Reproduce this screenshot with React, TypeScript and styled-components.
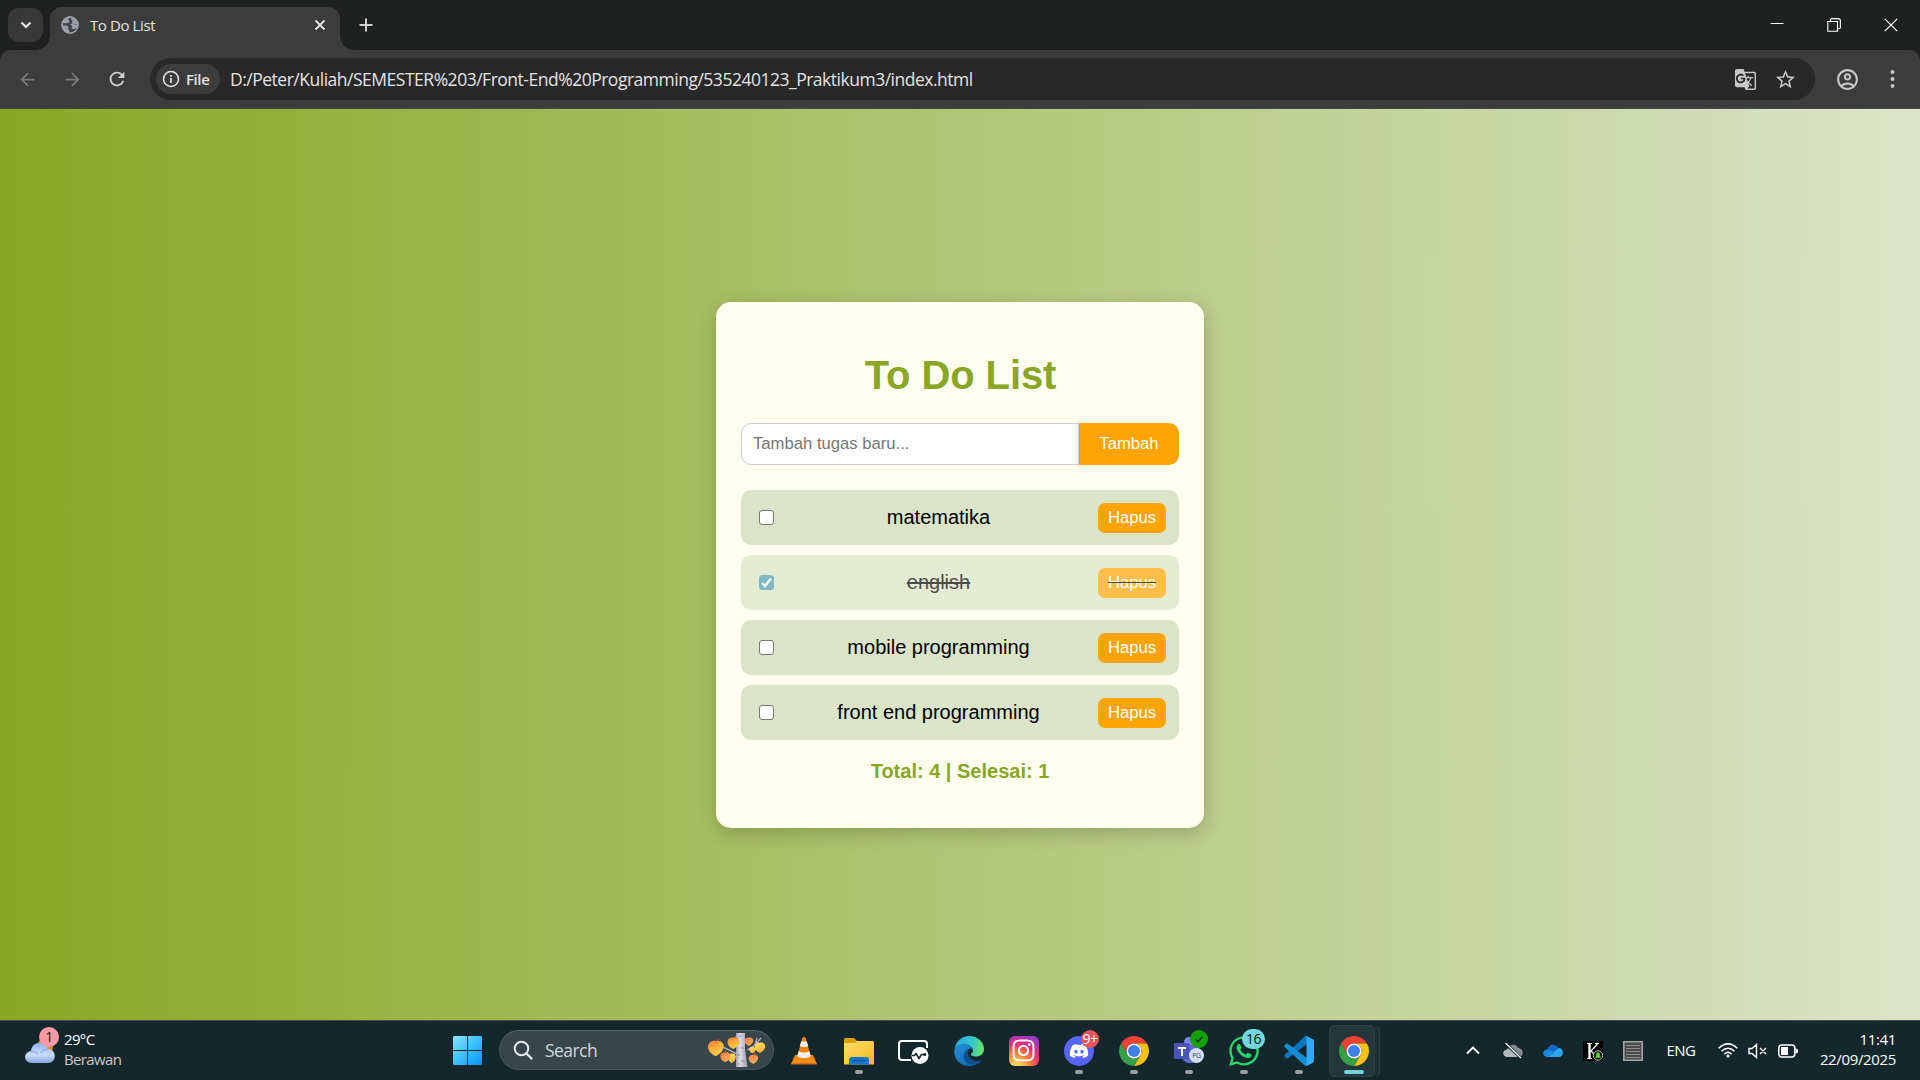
import React, { useState } from "react";
import styled, { createGlobalStyle } from "styled-components";
import {
  MdArrowBack,
  MdArrowForward,
  MdGTranslate,
  MdOutlineAccountCircle,
  MdRefresh,
  MdStarBorder,
} from "react-icons/md";
import { FaDiscord, FaInstagram, FaWhatsapp } from "react-icons/fa6";

const uiFont = `"Open Sans", "Noto Sans", sans-serif`;
const pageFont = `"Liberation Sans", Arial, sans-serif`;

const Global = createGlobalStyle`
  * { box-sizing: border-box; }
  body { margin: 0; background: #1f2120; overflow: hidden; }
  svg { display: block; flex: none; }
`;

const Screen = styled.div`
  width: 1920px;
  height: 1080px;
  display: grid;
  grid-template-rows: 50px 59px 911px 60px;
  overflow: hidden;
`;

/* ---------- Browser chrome ---------- */

const TabStrip = styled.header`
  display: flex;
  background: #1f2120;
  padding-left: 8px;
  font-family: ${uiFont};
`;

const TabSearch = styled.button`
  width: 35px;
  height: 34px;
  margin: 8px 7px 0 0;
  padding: 0;
  border: 0;
  border-radius: 11px;
  background: #383838;
  display: grid;
  place-items: center;
`;

const Tab = styled.div`
  position: relative;
  width: 290px;
  height: 43px;
  margin-top: 7px;
  padding: 0 14px 7px 11px;
  border-radius: 12px 12px 0 0;
  background: #3c3c3c;
  color: #e3e3e3;
  display: flex;
  align-items: center;
  &::before,
  &::after {
    content: "";
    position: absolute;
    bottom: 0;
    width: 14px;
    height: 14px;
  }
  &::before {
    left: -14px;
    background: radial-gradient(circle at 0 0, transparent 13.5px, #3c3c3c 14px);
  }
  &::after {
    right: -14px;
    background: radial-gradient(circle at 100% 0, transparent 13.5px, #3c3c3c 14px);
  }
`;

const TabTitle = styled.span`
  flex: 1;
  margin: 0 0 1px 11px;
  font-size: 15px;
  letter-spacing: -0.4px;
  line-height: 20px;
`;

const NewTab = styled.div`
  margin: 18px 0 0 19px;
`;

const WindowControls = styled.div`
  display: flex;
  gap: 43px;
  margin: 18px 22px 0 auto;
`;

const ToolbarBack = styled.div`
  background: #1f2120;
`;

const Toolbar = styled.div`
  height: 59px;
  background: #3c3c3c;
  border-radius: 11px 11px 0 0;
  border-bottom: 1px solid #474747;
  padding: 0 17px;
  display: flex;
  align-items: center;
  font-family: ${uiFont};
`;

const NavButtons = styled.nav`
  display: flex;
  align-items: center;
  gap: 23.5px;
  width: 133px;
  color: #7b7b7b;
  svg:last-child {
    color: #d0d0d0;
  }
`;

const Omnibox = styled.div`
  width: 1665px;
  height: 42px;
  border-radius: 21px;
  background: #282828;
  color: #e3e3e3;
  padding: 0 18px 0 6px;
  display: flex;
  align-items: center;
`;

const FileChip = styled.span`
  width: 64px;
  height: 30px;
  border-radius: 15px;
  background: #3c3c3c;
  padding-left: 6px;
  display: flex;
  align-items: center;
  gap: 6px;
  font-size: 15px;
  font-weight: 600;
  letter-spacing: -0.4px;
  line-height: 18px;
`;

const Url = styled.span`
  flex: 1;
  margin: 0 0 1px 10px;
  font-size: 17.5px;
  line-height: 24px;
  letter-spacing: -0.49px;
  white-space: nowrap;
`;

const OmniActions = styled.div`
  display: flex;
  align-items: center;
  gap: 17px;
  color: #c7c7c7;
`;

const ToolbarActions = styled.div`
  display: flex;
  align-items: center;
  gap: 22px;
  margin-left: 20px;
  color: #c7c7c7;
`;

/* ---------- To do page ---------- */

const Page = styled.main`
  background: linear-gradient(to right, #8aa624, #dbe4c9);
  display: flex;
  justify-content: center;
  align-items: center;
  font-family: ${pageFont};
`;

const Card = styled.section`
  width: 488px;
  height: 526px;
  padding: 25px;
  border-radius: 15px;
  background: #fffff0;
  box-shadow: 0 5px 19px rgba(0, 0, 0, 0.2);
  text-align: center;
`;

const Title = styled.h1`
  margin: 26px 0 25px;
  padding-left: 1px;
  font-size: 40px;
  line-height: 45px;
  letter-spacing: -0.1px;
  color: #8aa624;
`;

const AddForm = styled.form`
  display: flex;
  height: 42px;
  margin-bottom: 25px;
`;

const TaskInput = styled.input`
  flex: 1;
  min-width: 0;
  border: 1px solid #ccc;
  border-radius: 10px 0 0 10px;
  padding: 0 12px 0 11px;
  background: #fff;
  font: 16.67px ${pageFont};
  outline: none;
  &::placeholder {
    color: #757575;
  }
`;

const AddButton = styled.button`
  width: 100px;
  border: 0;
  border-radius: 0 10px 10px 0;
  padding: 0;
  background: #fea405;
  color: #fffff0;
  font: 16.67px ${pageFont};
`;

const TaskList = styled.ul`
  margin: 0;
  padding: 0;
  list-style: none;
  display: flex;
  flex-direction: column;
  gap: 10px;
`;

const TaskItem = styled.li<{ $done: boolean }>`
  height: 55px;
  border-radius: 10px;
  padding: 0 13px 0 18px;
  background: #dbe4c9;
  display: flex;
  align-items: center;
  font-size: 20px;
  line-height: 23px;
  opacity: ${(p) => (p.$done ? 0.7 : 1)};
  text-decoration: ${(p) => (p.$done ? "line-through" : "none")};
`;

const Check = styled.button<{ $on: boolean }>`
  width: 15px;
  height: 15px;
  margin: 0 5px 0 0;
  padding: 0;
  border: 1px solid ${(p) => (p.$on ? "#4a9cae" : "#767676")};
  border-radius: 3px;
  background: ${(p) => (p.$on ? "#4a9cae" : "#fff")};
  display: grid;
  place-items: center;
`;

const TaskName = styled.span`
  flex: 1;
`;

const DeleteButton = styled.span`
  width: 68px;
  height: 30px;
  margin-top: 1px;
  border-radius: 7px;
  background: #fea405;
  color: #fff;
  font-size: 16.67px;
  line-height: 29px;
  cursor: pointer;
`;

const Summary = styled.p`
  margin: 20px 0 0;
  color: #8aa624;
  font-size: 20px;
  line-height: 23px;
  font-weight: bold;
`;

/* ---------- Taskbar ---------- */

const Taskbar = styled.footer`
  display: flex;
  background: #14272d;
  border-top: 1px solid #424f53;
  color: #fff;
  font-family: ${uiFont};
`;

const Weather = styled.div`
  width: 440px;
  padding: 6px 0 0 25px;
  display: flex;
  gap: 9px;
`;

const WeatherIcon = styled.div`
  position: relative;
  width: 30px;
  height: 36px;
`;

const WeatherText = styled.div`
  display: flex;
  flex-direction: column;
  padding-top: 2px;
  font-size: 15px;
  line-height: 20px;
  letter-spacing: -0.65px;
  span:last-child {
    color: #c5cacc;
  }
`;

const Badge = styled.span<{
  $bg: string;
  $fg: string;
  $size: number;
  $x: number;
  $y: number;
  $w?: number;
  $font?: number;
}>`
  position: absolute;
  left: ${(p) => p.$x}px;
  top: ${(p) => p.$y}px;
  min-width: ${(p) => p.$w ?? p.$size}px;
  height: ${(p) => p.$size}px;
  border-radius: ${(p) => p.$size / 2}px;
  background: ${(p) => p.$bg};
  color: ${(p) => p.$fg};
  font-size: ${(p) => p.$font ?? 14}px;
  line-height: 1;
  letter-spacing: -0.5px;
  display: flex;
  align-items: center;
  justify-content: center;
`;

const Slot = styled.div<{ $active?: boolean }>`
  position: relative;
  width: 55px;
  height: 59px;
  display: grid;
  place-items: center;
  isolation: isolate;
  &::before {
    content: "";
    display: ${(p) => (p.$active ? "block" : "none")};
    position: absolute;
    z-index: -1;
    left: 3px;
    top: 4px;
    width: 44px;
    height: 50px;
    border-radius: 5px;
    background: #25363b;
    border: 1px solid #2f4045;
    box-shadow: 5px 0 0 -1px #1b2e33, 6px 0 0 -1px #2f4045;
  }
`;

const Running = styled.i<{ $active?: boolean }>`
  position: absolute;
  bottom: 6px;
  left: 50%;
  transform: translateX(-50%);
  width: ${(p) => (p.$active ? 20 : 8)}px;
  height: 4px;
  border-radius: 2px;
  background: ${(p) => (p.$active ? "#6ed5dc" : "#98a0a3")};
`;

const SearchBox = styled.div`
  width: 275px;
  height: 40px;
  margin: 9px 2px 0 4px;
  padding: 0 7px 0 13px;
  border-radius: 20px;
  background: #36464b;
  border: 1px solid #45555a;
  border-top-color: #5a686c;
  display: flex;
  align-items: center;
  color: #d3d7d8;
  font-size: 17.5px;
  letter-spacing: -0.55px;
  span {
    flex: 1;
    margin: 0 0 1px 12px;
  }
`;

const AppTile = styled.div<{ $bg: string; $round: string }>`
  width: 30px;
  height: 30px;
  border-radius: ${(p) => p.$round};
  background: ${(p) => p.$bg};
  display: grid;
  place-items: center;
  color: #fff;
`;

const Tray = styled.div`
  display: flex;
  align-items: center;
  margin-left: auto;
  padding-right: 24px;
`;

const TrayCell = styled.div<{ $w: number }>`
  width: ${(p) => p.$w}px;
  display: flex;
  justify-content: center;
`;

const Language = styled.span`
  width: 58px;
  padding: 0 2px 1px 0;
  text-align: center;
  font-size: 15px;
  letter-spacing: -0.5px;
`;

const Clock = styled.div`
  width: 92px;
  display: flex;
  flex-direction: column;
  align-items: flex-end;
  font-size: 15px;
  line-height: 20px;
  letter-spacing: -0.35px;
  white-space: nowrap;
  padding-bottom: 3px;
`;

/* ---------- Drawings ---------- */

const GlobeIcon = () => (
  <svg width="18" height="18" viewBox="0 0 18 18">
    <circle cx="9" cy="9" r="8.900" fill="#9aa0a8" />
    <path
      d="M9.500 1.800Q7.200 2.200 7.200 4L9 5.300 6.800 7.300H1.800Q1.800 8.600 2.200 9.500H5.500L7.800 11 6.500 12.800 8.300 14V16.200Q13.500 16.700 15.800 11.800L13 13.300 10.500 12.300 11.200 9.800 9 8.800 11.500 7 12.800 8.500 16.200 8.600Q15.500 3 9.500 1.800z"
      fill="#3f4144"
    />
    <path d="M10 1.800Q9.500 4 11.500 4.500L11 6.500 13 8.200 16.500 8.300Q15.500 3 10 1.800z" fill="#9aa0a8" />
  </svg>
);

const ChromeLogo = () => (
  <svg width="30" height="30" viewBox="2 2 44 44">
    <path fill="#ea4335" d="M24 2a22 22 0 0 1 19.05 11H24a11 11 0 0 0-9.53 16.5L4.95 13A22 22 0 0 1 24 2z" />
    <path fill="#fbc116" d="M43.05 13A22 22 0 0 1 24 46l9.53-16.5A11 11 0 0 0 24 13z" />
    <path fill="#34a047" d="M24 46A22 22 0 0 1 4.95 13l9.52 16.5a11 11 0 0 0 19.06 0z" />
    <circle cx="24" cy="24" r="11" fill="#fff" />
    <circle cx="24" cy="24" r="8.8" fill="#3f7fea" />
  </svg>
);

const WindowsLogo = () => (
  <svg width="29" height="29" viewBox="0 0 29 29">
    <defs>
      <linearGradient id="win" gradientUnits="userSpaceOnUse" x1="0" y1="0" x2="29" y2="29">
        <stop offset="0" stopColor="#8be4ff" />
        <stop offset="0.5" stopColor="#3cc0fb" />
        <stop offset="1" stopColor="#0a93fb" />
      </linearGradient>
    </defs>
    <path fill="url(#win)" d="M1 0h13v14H0V1zM15 0h13l1 1v13H15zM0 15h14v14H1l-1-1zM15 15h14v13l-1 1H15z" />
  </svg>
);

const leaf = "M0-7C3-8 9-6 7.500 0c-1 4-4 6-7.500 8c-4-1-8-5-8-9C-8-6-3-8 0-7z";
const TreeDrawing = () => (
  <svg width="58" height="34" viewBox="0 0 58 34">
    <defs>
      <linearGradient id="bark">
        <stop offset="0" stopColor="#9d9fae" />
        <stop offset="0.35" stopColor="#e0deea" />
        <stop offset="1" stopColor="#9a98aa" />
      </linearGradient>
      <linearGradient id="leafA" x2="0.6" y2="1">
        <stop offset="0" stopColor="#ff7d3a" />
        <stop offset="0.45" stopColor="#ffa83a" />
        <stop offset="1" stopColor="#ffd24a" />
      </linearGradient>
      <linearGradient id="leafB" x2="0.6" y2="1">
        <stop offset="0" stopColor="#ffe070" />
        <stop offset="1" stopColor="#fbb52f" />
      </linearGradient>
      <linearGradient id="leafC" x2="0.6" y2="1">
        <stop offset="0" stopColor="#ff7b45" />
        <stop offset="1" stopColor="#ffac55" />
      </linearGradient>
    </defs>
    <path d="M15 14l12 6h4M39 17l8-5 6-7M47 12l8-2M49 5l-2 7" stroke="#a8acba" strokeWidth="1.400" fill="none" />
    <path fill="url(#bark)" d="M28 0h9v16l2.500 18H28z" />
    <path d="M31 3h3M29 10h3M33 15h3M29 22h3M33 28h4M30 31h2" stroke="#857f92" strokeWidth="0.800" />
    <path d={leaf} transform="translate(8 15)" fill="url(#leafA)" />
    <path d={leaf} transform="translate(25.500 10) scale(.75)" fill="url(#leafA)" />
    <path d={leaf} transform="translate(41 8.500) scale(.55)" fill="url(#leafC)" />
    <path d={leaf} transform="translate(24 25) scale(.5 .62)" fill="url(#leafB)" />
    <path d={leaf} transform="translate(17.500 24) scale(.65)" fill="url(#leafC)" />
    <path d={leaf} transform="translate(44.500 17) scale(.42)" fill="url(#leafB)" />
    <path d={leaf} transform="translate(52 14.500) scale(.68)" fill="url(#leafB)" />
    <path d={leaf} transform="translate(45.500 26) scale(.6)" fill="url(#leafC)" />
    <path d="M8 9.500L10.500 6M26 6l2-3M46 22.500l1-3M17 20l1-3" stroke="#e7693a" />
  </svg>
);

const VlcIcon = () => (
  <svg width="26" height="30" viewBox="0 0 26 30">
    <path fill="#f08a12" d="M4 19h18l4 9H0z" />
    <path fill="#d96a05" d="M0 27h26v1.500H0z" />
    <path fill="#ee7f10" d="M11.300 2l1.700-1.500L14.700 2l5 18c-2 3-11.400 3-13.400 0z" />
    <path fill="#eef0f2" d="M10.200 5.500h5.600l1.400 4.500c-2 1.600-6.400 1.600-8.400 0zM7.700 15c2.500 2 8.100 2 10.600 0l1.400 5c-2.500 2.800-10.900 2.800-13.400 0z" />
  </svg>
);

const FolderIcon = () => (
  <svg width="30" height="30" viewBox="0 0 30 30">
    <defs>
      <linearGradient id="fold" x2="1" y2="1">
        <stop offset="0" stopColor="#ffdf70" />
        <stop offset="1" stopColor="#f6b919" />
      </linearGradient>
    </defs>
    <path fill="#dda110" d="M0 3.500Q0 2 1.500 2H10l3 3v4H0z" />
    <path fill="url(#fold)" d="M0 7h11l2-2h15.500Q30 5 30 6.500V28.500H0z" />
    <path fill="#1076ca" d="M5 24q0-3 3-3h14q3 0 3 3v4.500H5z" />
    <path fill="#07539b" d="M8.500 24h13v1.200h-13z" />
  </svg>
);

const MonitorIcon = () => (
  <svg width="31" height="30" viewBox="0 0 31 30">
    <path d="M13 24H4q-3 0-3-3V8q0-3 3-3h22q3 0 3 3v4" stroke="#fff" strokeWidth="2" fill="none" />
    <circle cx="22" cy="19.500" r="8.500" fill="#fff" />
    <path d="M14 19.500h2.500l1.500-2 3 5 2.500-4h3" stroke="#14272d" strokeWidth="1.600" fill="none" strokeLinejoin="round" />
    <circle cx="26.800" cy="18.500" r="1.500" fill="#14272d" />
  </svg>
);

const EdgeIcon = () => (
  <svg width="30" height="30" viewBox="0 0 30 30">
    <defs>
      <linearGradient id="edgeTop" x1="0" y1="0.500" x2="1" y2="0.700">
        <stop offset="0" stopColor="#2aa9e4" />
        <stop offset="0.550" stopColor="#36c6c8" />
        <stop offset="1" stopColor="#6ce65a" />
      </linearGradient>
      <linearGradient id="edgeLow" x2="1" y2="1">
        <stop offset="0" stopColor="#2392dc" />
        <stop offset="1" stopColor="#0c59a4" />
      </linearGradient>
    </defs>
    <path fill="url(#edgeTop)" d="M0.500 13C2 5 8 0 15 0c9 0 15 6.500 15 13 0 5-4 7.500-8 7.500-3.500 0-5.500-1.300-5-2.500.8-.8 2-1.800 2-4 0-3-4-5.500-8.500-5.500C6 8.500 2 10.500.5 13z" />
    <path fill="url(#edgeLow)" d="M.3 14C1.500 10.500 5.500 8.400 10.500 8.400c4.700 0 8.500 2.600 8.500 5.600-1-1.500-3-2-4.500-1-4 3-3.500 9 1 12 4 2.500 9 2 12-1C25 28 20 30 15 30 6 30-.7 22.500.3 14z" />
    <path fill="#0d4f8f" d="M14.500 13C9.500 15.500 8 22 12 26c3 3 9.500 3.500 13 1 1.500-1 3-2.500 3.200-3.600-3.200 2.100-8.700 2.100-11.700-.9-2.500-2.500-3-5-2-9.500z" />
  </svg>
);

const TeamsIcon = () => (
  <svg width="30" height="30" viewBox="0 0 30 30">
    <circle cx="15" cy="6" r="5" fill="#7b83eb" />
    <path fill="#5f68ce" d="M8 9h16v11c0 9-15 10-16 0z" />
    <path fill="#4b53bc" d="M1 7h13q1.500 0 1.500 1.500v13q0 1.500-1.500 1.500H1q-1 0-1-1V8q0-1 1-1z" />
    <path d="M4 12h8M8 12v8" stroke="#fff" strokeWidth="2" />
  </svg>
);

const CodeIcon = () => (
  <svg width="30" height="30" viewBox="0 0 100 100">
    <path fill="#0b76bd" d="M96 11L76 1q-4-1-7 1L2 63q-3 3 0 6l5 5q3 2 6 0L93 14z" />
    <path fill="#168bd2" d="M96 89L76 99q-4 1-7-1L2 37q-3-3 0-6l5-5q3-2 6 0l80 60z" />
    <path fill="#31a9f3" d="M76 99q-4 1-7-2c3 2 6 0 6-4V7c0-4-3-6-6-4q3-3 7-2l20 10q4 2 4 6v66q0 4-4 6z" />
  </svg>
);

const CloudWeather = () => (
  <svg width="30" height="36" viewBox="0 0 30 36">
    <defs>
      <linearGradient id="cloud" x2="0" y2="1">
        <stop offset="0" stopColor="#8eb4f2" />
        <stop offset="0.600" stopColor="#c9dcfb" />
        <stop offset="1" stopColor="#86a5dd" />
      </linearGradient>
    </defs>
    <circle cx="20" cy="20" r="8" fill="#f28520" />
    <path fill="url(#cloud)" d="M7 36c-9 0-9-11-1-12 1-10 14-11 17-2 9 0 9 14 0 14z" />
    <path d="M6 25c4-1 6 1 7 3M16 26c1-3 4-4 7-4" stroke="#7fa4e6" fill="none" />
  </svg>
);

const trayCloud = "M5 14C-1 14-1 7 4 6.500 6 1 13 0 15 5c6 0 6 9 1 9z";

const tasks = ["matematika", "english", "mobile programming", "front end programming"];

export default function App() {
  const [done, setDone] = useState([false, true, false, false]);
  const toggle = (i: number) => setDone((d) => d.map((v, j) => (j === i ? !v : v)));

  return (
    <Screen>
      <Global />
      <TabStrip>
        <TabSearch aria-label="Search tabs">
          <svg width="12" height="8" viewBox="0 0 12 8">
            <path d="M1.500 1.500L6 6l4.500-4.500" stroke="#e3e3e3" strokeWidth="2.200" fill="none" />
          </svg>
        </TabSearch>
        <Tab>
          <GlobeIcon />
          <TabTitle>To Do List</TabTitle>
          <svg width="12" height="12" viewBox="0 0 12 12">
            <path d="M1.500 1.500l9 9M10.500 1.500l-9 9" stroke="#e3e3e3" strokeWidth="1.800" />
          </svg>
        </Tab>
        <NewTab>
          <svg width="14" height="14" viewBox="0 0 14 14">
            <path d="M7 .5v13M.5 7h13" stroke="#d0d0d0" strokeWidth="2" />
          </svg>
        </NewTab>
        <WindowControls>
          <svg width="14" height="14" viewBox="0 0 14 14">
            <path d="M.5 5.500h13" stroke="#fff" />
          </svg>
          <svg width="14" height="14" viewBox="0 0 14 14">
            <path d="M.8 3.500h9.700v9.700H.8zM3.500 3V1.800q0-1.200 1.200-1.200H11q2.400 0 2.400 2.400v6.500q0 1.200-1.500 1.200H11" stroke="#fff" strokeWidth="1.100" fill="none" />
          </svg>
          <svg width="14" height="14" viewBox="0 0 14 14">
            <path d="M.8.8l12.400 12.400M13.200.8L.8 13.200" stroke="#fff" strokeWidth="1.200" />
          </svg>
        </WindowControls>
      </TabStrip>

      <ToolbarBack>
        <Toolbar>
          <NavButtons>
            <MdArrowBack size={21} />
            <MdArrowForward size={21} />
            <MdRefresh size={22} />
          </NavButtons>
          <Omnibox>
            <FileChip>
              <svg width="18" height="18" viewBox="0 0 18 18">
                <circle cx="9" cy="9" r="7.500" stroke="#e3e3e3" strokeWidth="1.600" fill="none" />
                <path d="M9 8v5M9 5v1.700" stroke="#e3e3e3" strokeWidth="1.700" />
              </svg>
              File
            </FileChip>
            <Url>D:/Peter/Kuliah/SEMESTER%203/Front-End%20Programming/535240123_Praktikum3/index.html</Url>
            <OmniActions>
              <MdGTranslate size={23} />
              <MdStarBorder size={23} />
            </OmniActions>
          </Omnibox>
          <ToolbarActions>
            <MdOutlineAccountCircle size={25} />
            <svg width="20" height="20" viewBox="0 0 20 20" fill="#c7c7c7">
              <circle cx="10.500" cy="3" r="2" />
              <circle cx="10.500" cy="10" r="2" />
              <circle cx="10.500" cy="17" r="2" />
            </svg>
          </ToolbarActions>
        </Toolbar>
      </ToolbarBack>

      <Page>
        <Card>
          <Title>To Do List</Title>
          <AddForm onSubmit={(e) => e.preventDefault()}>
            <TaskInput placeholder="Tambah tugas baru..." />
            <AddButton>Tambah</AddButton>
          </AddForm>
          <TaskList>
            {tasks.map((name, i) => (
              <TaskItem key={name} $done={done[i]}>
                <Check $on={done[i]} onClick={() => toggle(i)} aria-label={name}>
                  {done[i] && (
                    <svg width="13" height="13" viewBox="0 0 13 13">
                      <path d="M2 7l3 3 6-7.500" stroke="#fff" strokeWidth="2.200" fill="none" />
                    </svg>
                  )}
                </Check>
                <TaskName>{name}</TaskName>
                <DeleteButton>Hapus</DeleteButton>
              </TaskItem>
            ))}
          </TaskList>
          <Summary>
            Total: {tasks.length} | Selesai: {done.filter(Boolean).length}
          </Summary>
        </Card>
      </Page>

      <Taskbar>
        <Weather>
          <WeatherIcon>
            <CloudWeather />
            <Badge $bg="#ff99a4" $fg="#1b1b1b" $size={20} $x={14} $y={0}>1</Badge>
          </WeatherIcon>
          <WeatherText>
            <span>29°C</span>
            <span>Berawan</span>
          </WeatherText>
        </Weather>
        <Slot><WindowsLogo /></Slot>
        <SearchBox>
          <svg width="20" height="20" viewBox="0 0 20 20">
            <circle cx="8.500" cy="8.500" r="6.800" stroke="#e5e8e8" strokeWidth="2" fill="none" />
            <path d="M13.500 13.500l5 5" stroke="#e5e8e8" strokeWidth="2.400" strokeLinecap="round" />
          </svg>
          <span>Search</span>
          <TreeDrawing />
        </SearchBox>
        <Slot><VlcIcon /></Slot>
        <Slot><FolderIcon /><Running /></Slot>
        <Slot><MonitorIcon /></Slot>
        <Slot><EdgeIcon /></Slot>
        <Slot>
          <AppTile $round="6px" $bg="radial-gradient(circle at 25% 105%, #ffd35c 0 12%, #ff7a3c 38%, #e62e78 62%, #b035b5 80%, #6c4de0 105%)">
            <FaInstagram size={25} />
          </AppTile>
        </Slot>
        <Slot>
          <AppTile $round="50%" $bg="#5865f2"><FaDiscord size={20} /></AppTile>
          <Badge $bg="#eb5459" $fg="#fff" $size={18} $x={30} $y={9}>9+</Badge>
          <Running />
        </Slot>
        <Slot><ChromeLogo /><Running /></Slot>
        <Slot>
          <TeamsIcon />
          <Badge $bg="#d3dff0" $fg="#33465c" $size={15} $x={28} $y={27} $font={7}>PG</Badge>
          <Badge $bg="#13a10e" $fg="#0d2a16" $size={18} $x={29} $y={9}>
            <svg width="8" height="7" viewBox="0 0 8 7">
              <path d="M.8 3.500L3 5.700 7.200 1" stroke="#0d2a16" strokeWidth="1.500" fill="none" />
            </svg>
          </Badge>
          <Running />
        </Slot>
        <Slot>
          <FaWhatsapp size={34} color="#25d366" />
          <Badge $bg="#73d7df" $fg="#111" $size={20} $w={23} $x={26} $y={8}>16</Badge>
          <Running />
        </Slot>
        <Slot><CodeIcon /><Running /></Slot>
        <Slot $active><ChromeLogo /><Running $active /></Slot>
        <Tray>
          <TrayCell $w={40}>
            <svg width="14" height="9" viewBox="0 0 14 9">
              <path d="M1 7.500l6-6 6 6" stroke="#fff" strokeWidth="1.900" fill="none" />
            </svg>
          </TrayCell>
          <TrayCell $w={40}>
            <svg width="20" height="16" viewBox="0 0 20 16">
              <path fill="#848d91" d={trayCloud} />
              <path fill="#b4babc" d="M4 6.500q4-1 6 2l8 4q-1 1.500-2 1.500H5C-1 14-1 7 4 6.500z" />
              <path d="M2 0l16 15" stroke="#14272d" strokeWidth="3" />
              <path d="M2.500 0l15.500 15" stroke="#fff" strokeWidth="1.300" />
            </svg>
          </TrayCell>
          <TrayCell $w={40}>
            <svg width="20" height="16" viewBox="0 0 20 16">
              <path fill="#0f6cc9" d={trayCloud} />
              <path fill="#2ea6ee" d="M5 14l7-6q2-2 4-3c5 0 5 9 0 9z" />
              <path fill="#1889dc" d="M4 6.500q3-.5 6 2l2 1L5 14C-1 14-1 7 4 6.500z" />
            </svg>
          </TrayCell>
          <TrayCell $w={40}>
            <svg width="20" height="20" viewBox="0 0 20 20">
              <path fill="#000" d="M0 0h20v20H0z" />
              <path d="M4 2.500h5M4 17.500h5M12 2.500h4M14.500 3L8 10l4 4" stroke="#fff" strokeWidth="1.200" fill="none" />
              <path d="M6.500 3v14" stroke="#fff" strokeWidth="2.400" />
              <circle cx="15" cy="14.500" r="4.700" fill="#111" stroke="#b9c3b9" />
              <path d="M12.500 16.500q1-1 1-4 1.500-2 3 0 0 3 1 4z" fill="#56e51c" stroke="#56e51c" strokeWidth="0.500" />
            </svg>
          </TrayCell>
          <TrayCell $w={40}>
            <svg width="20" height="20" viewBox="0 0 20 20">
              <path fill="#4a4a4a" stroke="#a4a4a4" strokeWidth="1.600" d="M.8.8h18.400v18.400H.8z" />
              <path d="M3 4.500h14M3 7.500h14M3 10.500h14M3 13.500h14M3 16.500h14" stroke="#8f8f8f" />
            </svg>
          </TrayCell>
          <Language>ENG</Language>
          <TrayCell $w={33}>
            <svg width="20" height="15" viewBox="0 0 20 15" fill="none" stroke="#fff" strokeWidth="1.500">
              <path d="M.7 5.200q9.300-8.700 18.600 0M3.500 8.200q6.500-6 13 0M6.300 11.100q3.700-3.400 7.400 0" />
              <circle cx="10" cy="13" r="1.500" fill="#fff" stroke="none" />
            </svg>
          </TrayCell>
          <TrayCell $w={27}>
            <svg width="20" height="16" viewBox="0 0 20 16" fill="none" stroke="#fff" strokeWidth="1.400">
              <path d="M1 5.500h3L8.500 1.500v13L4 10.500H1zM12 5l6 6M18 5l-6 6" />
            </svg>
          </TrayCell>
          <TrayCell $w={33}>
            <svg width="20" height="14" viewBox="0 0 20 14">
              <rect x=".8" y="1" width="16" height="12" rx="3" stroke="#fff" strokeWidth="1.500" fill="none" />
              <path fill="#fff" d="M3 3h7v8H3zM17.500 4.500q2.500 0 2.500 2.500t-2.500 2.500z" />
            </svg>
          </TrayCell>
          <Clock>
            <span>11:41</span>
            <span>22/09/2025</span>
          </Clock>
        </Tray>
      </Taskbar>
    </Screen>
  );
}
